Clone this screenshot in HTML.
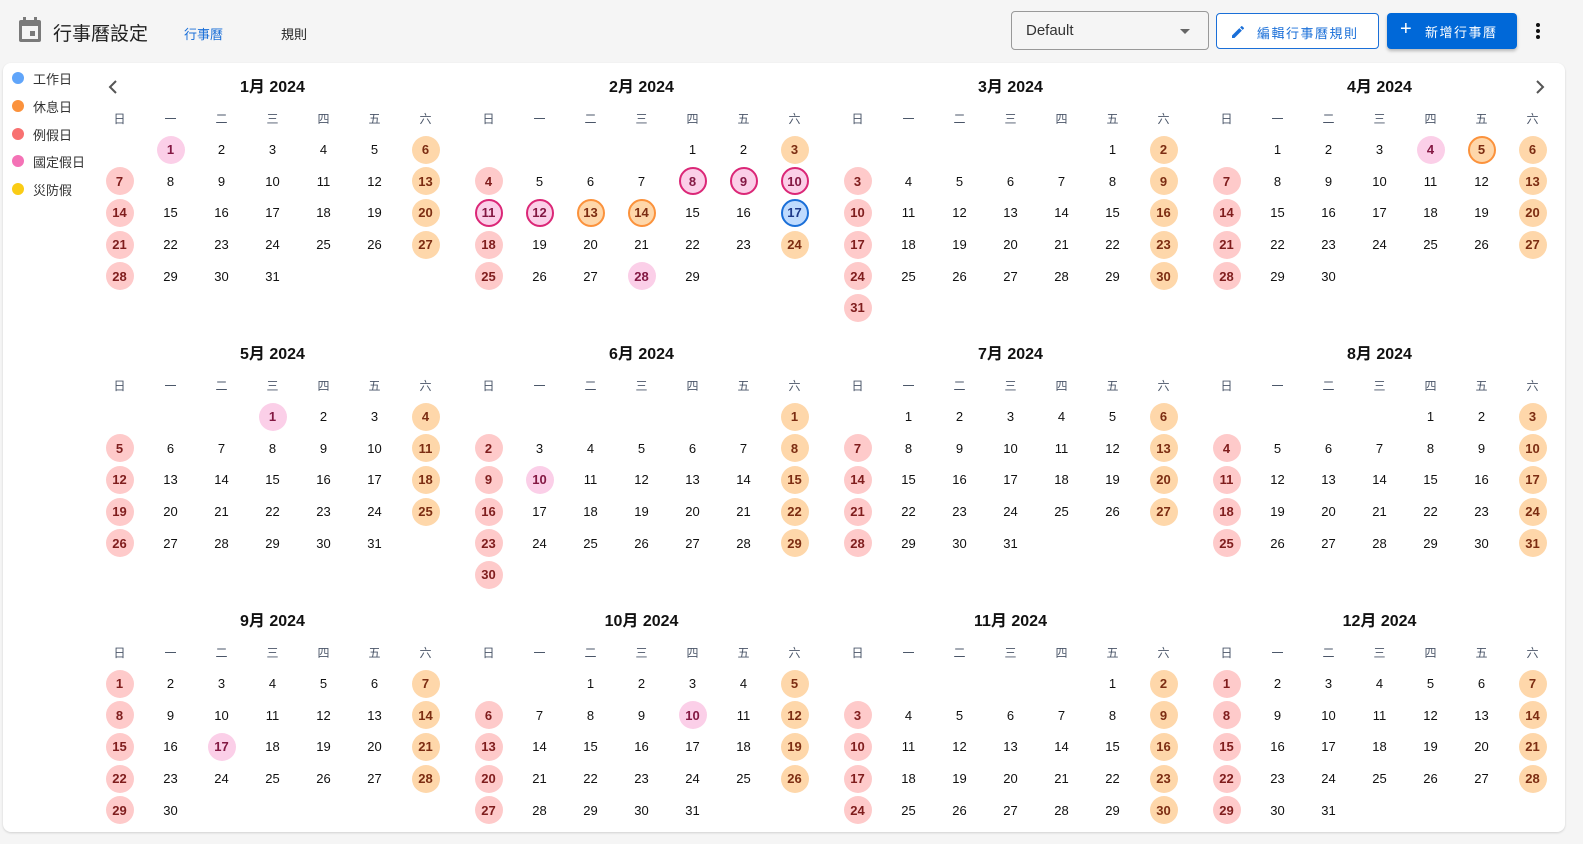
<!DOCTYPE html>
<html><head><meta charset="utf-8">
<style>
*{box-sizing:border-box;margin:0;padding:0}
body{width:1583px;height:844px;background:#f5f5f5;font-family:"Liberation Sans","Noto Sans CJK TC",sans-serif;position:relative;overflow:hidden;color:#1f1f1f}
.abs{position:absolute}
.card{position:absolute;left:3px;top:63px;width:1562px;height:769px;background:#fff;border-radius:8px;box-shadow:0 1px 2px rgba(0,0,0,.15)}
.leg{position:absolute;left:12px;font-size:13px;color:#333;display:flex;align-items:center;height:16px}
.leg i{width:12px;height:12px;border-radius:50%;margin-right:9px;display:inline-block}
.m{position:absolute;width:357px}
.t{height:24px;text-align:center;font-weight:bold;font-size:16px;color:#111;line-height:24px}
.h,.g{display:grid;grid-template-columns:repeat(7,51px)}
.h{margin-top:11px;height:16px;line-height:16px}
.h span{text-align:center;font-size:12px;color:#4a5568}
.g{grid-auto-rows:31.6px;margin-top:7px}
.g b{display:flex;align-items:center;justify-content:center;font-size:13px;font-weight:500;color:#111;position:relative;z-index:0}
.g b.r,.g b.o,.g b.p,.g b.P,.g b.O,.g b.B{font-weight:bold}
.g b.r::before,.g b.o::before,.g b.p::before,.g b.P::before,.g b.O::before,.g b.B::before{content:"";position:absolute;width:28px;height:28px;border-radius:50%;left:11.5px;top:1.8px;box-sizing:border-box;z-index:-1}
.g b.r::before{background:#fecaca}.g b.r{color:#7f1d1d}
.g b.o::before{background:#fed7aa}.g b.o{color:#7c2d12}
.g b.p::before{background:#fbcfe8}.g b.p{color:#831843}
.g b.P::before{background:#fbcfe8;border:2px solid #db2777}.g b.P{color:#831843}
.g b.O::before{background:#fed7aa;border:2px solid #fb923c}.g b.O{color:#7c2d12}
.g b.B::before{background:#bfdbfe;border:2px solid #1a6fd8}.g b.B{color:#1e3a8a}
</style></head><body>
<svg class="abs" style="left:17px;top:16px" width="26" height="28" viewBox="0 0 26 28"><rect x="2" y="4" width="22" height="22" rx="2" fill="#7a7a7a"/><rect x="5" y="10" width="16" height="13" fill="#f5f5f5"/><rect x="13" y="15" width="5" height="5" fill="#7a7a7a"/><rect x="6" y="1" width="3" height="5" fill="#7a7a7a"/><rect x="17" y="1" width="3" height="5" fill="#7a7a7a"/></svg>
<div class="abs" style="left:53px;top:19px;font-size:19px;color:#222">行事曆設定</div>
<div class="abs" style="left:184px;top:24px;font-size:13px;color:#1a6fd8">行事曆</div>
<div class="abs" style="left:281px;top:24px;font-size:13px;color:#222">規則</div>
<div class="abs" style="left:1011px;top:11px;width:198px;height:39px;border:1px solid #999;border-radius:4px;background:#f5f5f5"><span class="abs" style="left:14px;top:10px;font-size:15px;color:#333">Default</span><span class="abs" style="left:168px;top:17px;border-left:5px solid transparent;border-right:5px solid transparent;border-top:5px solid #666"></span></div>
<div class="abs" style="left:1216px;top:13px;width:163px;height:36px;border:1px solid #1a6fd8;border-radius:4px;background:#fff"><svg class="abs" style="left:13px;top:10px" width="16" height="16" viewBox="0 0 24 24"><path d="M3 17.25V21h3.75L17.81 9.94l-3.75-3.75L3 17.25zM20.71 7.04a1 1 0 000-1.41l-2.34-2.34a1 1 0 00-1.41 0l-1.830 1.83 3.75 3.75 1.83-1.83z" fill="#1a6fd8"/></svg><span class="abs" style="left:40px;top:9px;font-size:13px;color:#1a6fd8;letter-spacing:1.5px">編輯行事曆規則</span></div>
<div class="abs" style="left:1387px;top:13px;width:130px;height:36px;background:#0068d8;border-radius:4px;box-shadow:0 2px 3px rgba(0,0,0,.25)"><span class="abs" style="left:13px;top:5px;font-size:20px;color:#fff">+</span><span class="abs" style="left:38px;top:9px;font-size:13px;color:#fff;letter-spacing:1.5px">新增行事曆</span></div>
<div class="abs" style="left:1536px;top:23px;width:4px;height:4px;border-radius:50%;background:#111;box-shadow:0 6px 0 #111,0 12px 0 #111"></div>
<div class="card"></div>
<div class="leg" style="top:70px"><i style="background:#60a5fa"></i>工作日</div>
<div class="leg" style="top:98px"><i style="background:#fb923c"></i>休息日</div>
<div class="leg" style="top:126px"><i style="background:#f87171"></i>例假日</div>
<div class="leg" style="top:153px"><i style="background:#f472b6"></i>國定假日</div>
<div class="leg" style="top:181px"><i style="background:#facc15"></i>災防假</div>
<svg class="abs" style="left:107px;top:79px" width="12" height="16" viewBox="0 0 12 16"><path d="M9 2L3 8l6 6" stroke="#555" stroke-width="2" fill="none"/></svg>
<svg class="abs" style="left:1534px;top:79px" width="12" height="16" viewBox="0 0 12 16"><path d="M3 2l6 6-6 6" stroke="#555" stroke-width="2" fill="none"/></svg>

<div class="m" style="left:94px;top:76px"><div class="t">1月 2024</div><div class="h"><span>日</span><span>一</span><span>二</span><span>三</span><span>四</span><span>五</span><span>六</span></div><div class="g">
<b class="p" style="grid-column:2">1</b><b>2</b><b>3</b><b>4</b><b>5</b><b class="o">6</b>
<b class="r">7</b><b>8</b><b>9</b><b>10</b><b>11</b><b>12</b><b class="o">13</b>
<b class="r">14</b><b>15</b><b>16</b><b>17</b><b>18</b><b>19</b><b class="o">20</b>
<b class="r">21</b><b>22</b><b>23</b><b>24</b><b>25</b><b>26</b><b class="o">27</b>
<b class="r">28</b><b>29</b><b>30</b><b>31</b></div></div>

<div class="m" style="left:463px;top:76px"><div class="t">2月 2024</div><div class="h"><span>日</span><span>一</span><span>二</span><span>三</span><span>四</span><span>五</span><span>六</span></div><div class="g">
<b style="grid-column:5">1</b><b>2</b><b class="o">3</b>
<b class="r">4</b><b>5</b><b>6</b><b>7</b><b class="P">8</b><b class="P">9</b><b class="P">10</b>
<b class="P">11</b><b class="P">12</b><b class="O">13</b><b class="O">14</b><b>15</b><b>16</b><b class="B">17</b>
<b class="r">18</b><b>19</b><b>20</b><b>21</b><b>22</b><b>23</b><b class="o">24</b>
<b class="r">25</b><b>26</b><b>27</b><b class="p">28</b><b>29</b></div></div>

<div class="m" style="left:832px;top:76px"><div class="t">3月 2024</div><div class="h"><span>日</span><span>一</span><span>二</span><span>三</span><span>四</span><span>五</span><span>六</span></div><div class="g">
<b style="grid-column:6">1</b><b class="o">2</b>
<b class="r">3</b><b>4</b><b>5</b><b>6</b><b>7</b><b>8</b><b class="o">9</b>
<b class="r">10</b><b>11</b><b>12</b><b>13</b><b>14</b><b>15</b><b class="o">16</b>
<b class="r">17</b><b>18</b><b>19</b><b>20</b><b>21</b><b>22</b><b class="o">23</b>
<b class="r">24</b><b>25</b><b>26</b><b>27</b><b>28</b><b>29</b><b class="o">30</b>
<b class="r">31</b></div></div>

<div class="m" style="left:1201px;top:76px"><div class="t">4月 2024</div><div class="h"><span>日</span><span>一</span><span>二</span><span>三</span><span>四</span><span>五</span><span>六</span></div><div class="g">
<b style="grid-column:2">1</b><b>2</b><b>3</b><b class="p">4</b><b class="O">5</b><b class="o">6</b>
<b class="r">7</b><b>8</b><b>9</b><b>10</b><b>11</b><b>12</b><b class="o">13</b>
<b class="r">14</b><b>15</b><b>16</b><b>17</b><b>18</b><b>19</b><b class="o">20</b>
<b class="r">21</b><b>22</b><b>23</b><b>24</b><b>25</b><b>26</b><b class="o">27</b>
<b class="r">28</b><b>29</b><b>30</b></div></div>

<div class="m" style="left:94px;top:343px"><div class="t">5月 2024</div><div class="h"><span>日</span><span>一</span><span>二</span><span>三</span><span>四</span><span>五</span><span>六</span></div><div class="g">
<b class="p" style="grid-column:4">1</b><b>2</b><b>3</b><b class="o">4</b>
<b class="r">5</b><b>6</b><b>7</b><b>8</b><b>9</b><b>10</b><b class="o">11</b>
<b class="r">12</b><b>13</b><b>14</b><b>15</b><b>16</b><b>17</b><b class="o">18</b>
<b class="r">19</b><b>20</b><b>21</b><b>22</b><b>23</b><b>24</b><b class="o">25</b>
<b class="r">26</b><b>27</b><b>28</b><b>29</b><b>30</b><b>31</b></div></div>

<div class="m" style="left:463px;top:343px"><div class="t">6月 2024</div><div class="h"><span>日</span><span>一</span><span>二</span><span>三</span><span>四</span><span>五</span><span>六</span></div><div class="g">
<b class="o" style="grid-column:7">1</b>
<b class="r">2</b><b>3</b><b>4</b><b>5</b><b>6</b><b>7</b><b class="o">8</b>
<b class="r">9</b><b class="p">10</b><b>11</b><b>12</b><b>13</b><b>14</b><b class="o">15</b>
<b class="r">16</b><b>17</b><b>18</b><b>19</b><b>20</b><b>21</b><b class="o">22</b>
<b class="r">23</b><b>24</b><b>25</b><b>26</b><b>27</b><b>28</b><b class="o">29</b>
<b class="r">30</b></div></div>

<div class="m" style="left:832px;top:343px"><div class="t">7月 2024</div><div class="h"><span>日</span><span>一</span><span>二</span><span>三</span><span>四</span><span>五</span><span>六</span></div><div class="g">
<b style="grid-column:2">1</b><b>2</b><b>3</b><b>4</b><b>5</b><b class="o">6</b>
<b class="r">7</b><b>8</b><b>9</b><b>10</b><b>11</b><b>12</b><b class="o">13</b>
<b class="r">14</b><b>15</b><b>16</b><b>17</b><b>18</b><b>19</b><b class="o">20</b>
<b class="r">21</b><b>22</b><b>23</b><b>24</b><b>25</b><b>26</b><b class="o">27</b>
<b class="r">28</b><b>29</b><b>30</b><b>31</b></div></div>

<div class="m" style="left:1201px;top:343px"><div class="t">8月 2024</div><div class="h"><span>日</span><span>一</span><span>二</span><span>三</span><span>四</span><span>五</span><span>六</span></div><div class="g">
<b style="grid-column:5">1</b><b>2</b><b class="o">3</b>
<b class="r">4</b><b>5</b><b>6</b><b>7</b><b>8</b><b>9</b><b class="o">10</b>
<b class="r">11</b><b>12</b><b>13</b><b>14</b><b>15</b><b>16</b><b class="o">17</b>
<b class="r">18</b><b>19</b><b>20</b><b>21</b><b>22</b><b>23</b><b class="o">24</b>
<b class="r">25</b><b>26</b><b>27</b><b>28</b><b>29</b><b>30</b><b class="o">31</b></div></div>

<div class="m" style="left:94px;top:610px"><div class="t">9月 2024</div><div class="h"><span>日</span><span>一</span><span>二</span><span>三</span><span>四</span><span>五</span><span>六</span></div><div class="g">
<b class="r">1</b><b>2</b><b>3</b><b>4</b><b>5</b><b>6</b><b class="o">7</b>
<b class="r">8</b><b>9</b><b>10</b><b>11</b><b>12</b><b>13</b><b class="o">14</b>
<b class="r">15</b><b>16</b><b class="p">17</b><b>18</b><b>19</b><b>20</b><b class="o">21</b>
<b class="r">22</b><b>23</b><b>24</b><b>25</b><b>26</b><b>27</b><b class="o">28</b>
<b class="r">29</b><b>30</b></div></div>

<div class="m" style="left:463px;top:610px"><div class="t">10月 2024</div><div class="h"><span>日</span><span>一</span><span>二</span><span>三</span><span>四</span><span>五</span><span>六</span></div><div class="g">
<b style="grid-column:3">1</b><b>2</b><b>3</b><b>4</b><b class="o">5</b>
<b class="r">6</b><b>7</b><b>8</b><b>9</b><b class="p">10</b><b>11</b><b class="o">12</b>
<b class="r">13</b><b>14</b><b>15</b><b>16</b><b>17</b><b>18</b><b class="o">19</b>
<b class="r">20</b><b>21</b><b>22</b><b>23</b><b>24</b><b>25</b><b class="o">26</b>
<b class="r">27</b><b>28</b><b>29</b><b>30</b><b>31</b></div></div>

<div class="m" style="left:832px;top:610px"><div class="t">11月 2024</div><div class="h"><span>日</span><span>一</span><span>二</span><span>三</span><span>四</span><span>五</span><span>六</span></div><div class="g">
<b style="grid-column:6">1</b><b class="o">2</b>
<b class="r">3</b><b>4</b><b>5</b><b>6</b><b>7</b><b>8</b><b class="o">9</b>
<b class="r">10</b><b>11</b><b>12</b><b>13</b><b>14</b><b>15</b><b class="o">16</b>
<b class="r">17</b><b>18</b><b>19</b><b>20</b><b>21</b><b>22</b><b class="o">23</b>
<b class="r">24</b><b>25</b><b>26</b><b>27</b><b>28</b><b>29</b><b class="o">30</b></div></div>

<div class="m" style="left:1201px;top:610px"><div class="t">12月 2024</div><div class="h"><span>日</span><span>一</span><span>二</span><span>三</span><span>四</span><span>五</span><span>六</span></div><div class="g">
<b class="r">1</b><b>2</b><b>3</b><b>4</b><b>5</b><b>6</b><b class="o">7</b>
<b class="r">8</b><b>9</b><b>10</b><b>11</b><b>12</b><b>13</b><b class="o">14</b>
<b class="r">15</b><b>16</b><b>17</b><b>18</b><b>19</b><b>20</b><b class="o">21</b>
<b class="r">22</b><b>23</b><b>24</b><b>25</b><b>26</b><b>27</b><b class="o">28</b>
<b class="r">29</b><b>30</b><b>31</b></div></div>
</body></html>
